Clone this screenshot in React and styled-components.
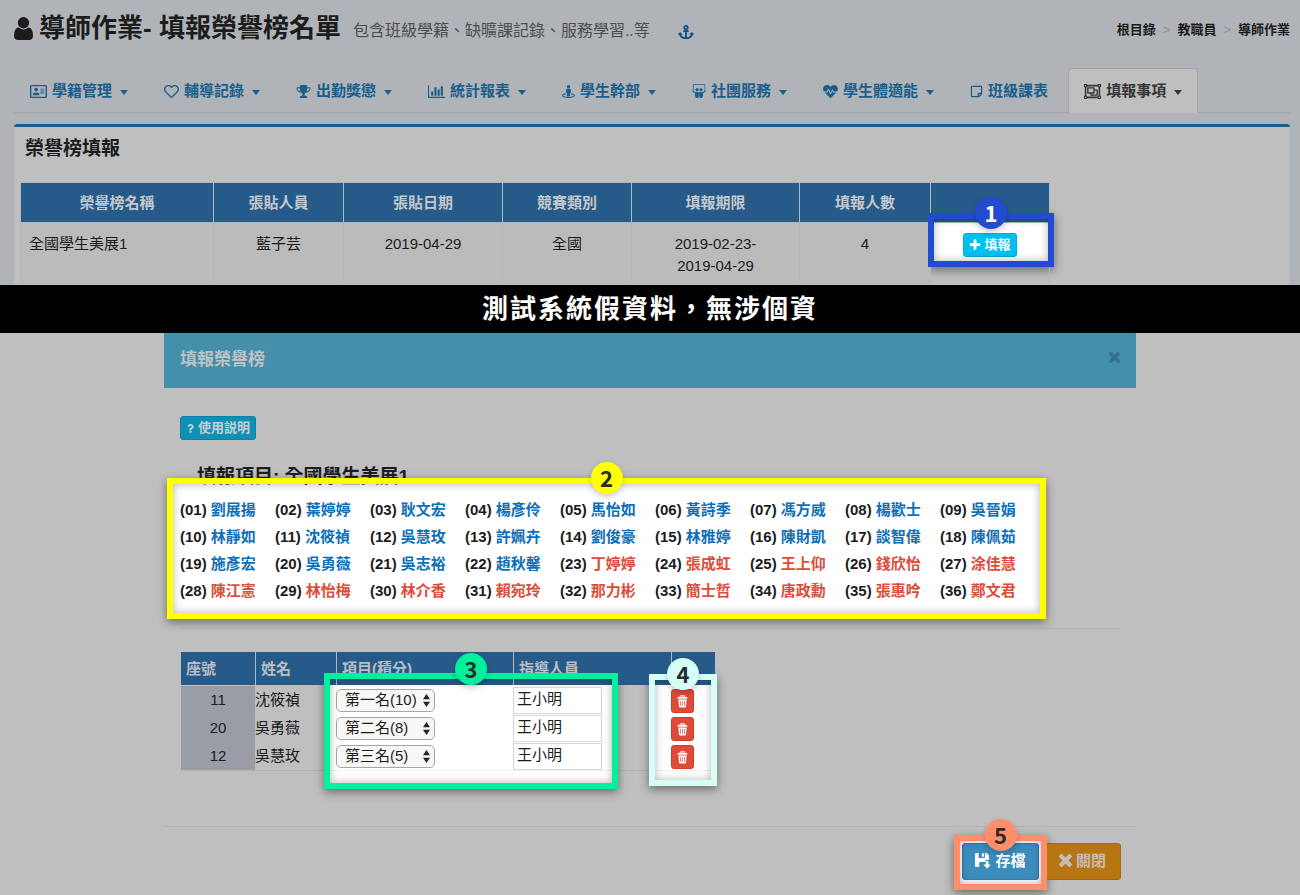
import React from "react";
import styled, { createGlobalStyle, css } from "styled-components";
import {
  FaAnchor,
  FaHeartbeat,
  FaQuestion,
  FaRegAddressCard,
  FaRegHeart,
  FaRegObjectGroup,
  FaRegStickyNote,
  FaSlideshare,
  FaStreetView,
} from "react-icons/fa";

const GlobalStyle = createGlobalStyle`
  *, *::before, *::after { box-sizing: border-box; }
  body {
    margin: 0;
    background: #bfbfbf;
    color: #1c1c1c;
    font-family: "Liberation Sans", "Noto Sans CJK TC", sans-serif;
    font-size: 15px;
    line-height: 22px;
  }
  button, input, select { font: inherit; }
  a { text-decoration: none; color: inherit; }
`;

/* ---------- icons ---------- */

const Glyph = ({ width, height, box, d }) => (
  <svg width={width} height={height} viewBox={box} fill="currentColor" aria-hidden="true">
    <path d={d} />
  </svg>
);

const UserIcon = () => (
  <Glyph
    width={19}
    height={23}
    box="256 128 1280 1536"
    d="M1536 1399q0 109-62.5 187t-150.5 78h-854q-88 0-150.5-78t-62.5-187q0-85 8.5-160.5t31.5-152 58.5-131 94-89 134.5-34.5q131 128 313 128t313-128q76 0 134.5 34.5t94 89 58.5 131 31.5 152 8.5 160.5zm-256-887q0 159-112.5 271.5t-271.5 112.5-271.5-112.5-112.5-271.5 112.5-271.5 271.5-112.5 271.5 112.5 112.5 271.5z"
  />
);

const TrophyIcon = () => (
  <Glyph
    width={15}
    height={15}
    box="0 0 1792 1792"
    d="M522 883q-74-162-74-371h-256v96q0 78 94.5 162t235.5 113zm1078-275v-96h-256q0 209-74 371 141-29 235.5-113t94.5-162zm128-128v128q0 71-41.5 143t-112 130-173 97.5-215.5 44.5q-42 54-95 95-38 34-52.5 72.5t-14.5 89.5q0 54 30.5 91t97.5 37q75 0 133.5 45.5t58.5 114.5v64q0 14-9 23t-23 9h-832q-14 0-23-9t-9-23v-64q0-69 58.5-114.5t133.5-45.5q67 0 97.5-37t30.5-91q0-51-14.5-89.5t-52.5-72.5q-53-41-95-95-113-5-215.5-44.5t-173-97.5-112-130-41.5-143v-128q0-40 28-68t68-28h288v-96q0-66 47-113t113-47h576q66 0 113 47t47 113v96h288q40 0 68 28t28 68z"
  />
);

const ChartIcon = () => (
  <Glyph
    width={17}
    height={15}
    box="0 0 2048 1792"
    d="M640 896v512h-256v-512h256zm384-512v1024h-256v-1024h256zm1024 1152v128h-2048v-1536h128v1408h1920zm-640-896v768h-256v-768h256zm384-384v1152h-256v-1152h256z"
  />
);

const PlusIcon = () => (
  <Glyph
    width={12}
    height={12}
    box="96 96 1600 1600"
    d="M1600 736v192q0 40-28 68t-68 28h-416v416q0 40-28 68t-68 28h-192q-40 0-68-28t-28-68v-416h-416q-40 0-68-28t-28-68v-192q0-40 28-68t68-28h416v-416q0-40 28-68t68-28h192q40 0 68 28t28 68v416h416q40 0 68 28t28 68z"
  />
);

const TimesIcon = ({ size }) => (
  <Glyph
    width={size}
    height={size}
    box="302 366 1188 1188"
    d="M1490 1322q0 40-28 68l-136 136q-28 28-68 28t-68-28l-294-294-294 294q-28 28-68 28t-68-28l-136-136q-28-28-28-68t28-68l294-294-294-294q-28-28-28-68t28-68l136-136q28-28 68-28t68 28l294 294 294-294q28-28 68-28t68 28l136 136q28 28 28 68t-28 68l-294 294 294 294q28 28 28 68z"
  />
);

const TrashIcon = () => (
  <svg width="11" height="13" viewBox="0 0 11 13" fill="none" aria-hidden="true">
    <path d="M3.8 1.8V.7h3.4v1.1" stroke="currentColor" strokeWidth="1.1" />
    <path d="M.6 3.8V2.8L1.8 1.8h7.4l1.2 1v1z" fill="currentColor" />
    <path
      fillRule="evenodd"
      fill="currentColor"
      d="M1.4 4.4h8.2L9 11.6q-.1.8-.9.8H2.9q-.8 0-.9-.8zM3.2 6v4.8h.7V6zm2 0v4.8h.7V6zm2 0v4.8h.7V6z"
    />
  </svg>
);

const SaveIcon = () => (
  <svg width="16" height="16" viewBox="0 0 16 16" fill="currentColor" aria-hidden="true">
    <path d="M1 0h2.6v5H10V0h1.6L14 2.4V7h-3.6v2H4.2v5H1q-1 0-1-1V1q0-1 1-1z" />
    <path d="M6.8.4h2.3v3.4H6.8z" />
    <path d="M10.8 8h2.6v3.4h2.4L12 15.8 8.4 11.4h2.4z" />
  </svg>
);

/* ---------- numbered callouts ---------- */

const place = css`
  position: absolute;
  pointer-events: none;
  top: ${(p) => p.$at.top}px;
  left: ${(p) => (p.$at.left === undefined ? "auto" : `${p.$at.left}px`)};
  right: ${(p) => (p.$at.right === undefined ? "auto" : `${p.$at.right}px`)};
  bottom: ${(p) => (p.$at.bottom === undefined ? "auto" : `${p.$at.bottom}px`)};
  width: ${(p) => (p.$at.width === undefined ? "auto" : `${p.$at.width}px`)};
  height: ${(p) => (p.$at.height === undefined ? "auto" : `${p.$at.height}px`)};
`;

const Spotlight = styled.div`
  ${place}
  z-index: 0;
  background: #fff;
  box-shadow: 0 3px 9px rgba(0, 0, 0, 0.45);
`;

const Frame = styled.div`
  ${place}
  z-index: 2;
  border: 6px solid ${(p) => p.$color};
  box-shadow: inset 0 0 8px rgba(0, 0, 0, 0.3);
`;

const Badge = styled.span`
  position: absolute;
  top: ${(p) => p.$top}px;
  left: calc(50% - 16px);
  width: 32px;
  height: 32px;
  border-radius: 50%;
  background: ${(p) => p.$color};
  color: ${(p) => p.$ink};
  font: bold 22px/30px "Noto Sans CJK TC", sans-serif;
  text-align: center;
  box-shadow: 0 3px 6px rgba(0, 0, 0, 0.2);
`;

const Callout = ({ number, color, ink = "#2a2a2a", at, badgeTop = -22 }) => (
  <>
    <Spotlight $at={at} />
    <Frame $at={at} $color={color}>
      <Badge $color={color} $ink={ink} $top={badgeTop}>
        {number}
      </Badge>
    </Frame>
  </>
);

/* ---------- page top ---------- */

const Page = styled.div`
  min-width: 1064px;
`;

const Top = styled.div`
  padding: 0 10px 0 14px;
  background: #b0b4b8;
`;

const Header = styled.header`
  display: flex;
  align-items: center;
  justify-content: space-between;
  height: 68px;
  padding-bottom: 12px;
`;

const Heading = styled.div`
  display: flex;
  align-items: center;
`;

const Title = styled.h1`
  display: flex;
  align-items: center;
  gap: 6px;
  margin: 0 12px 0 0;
  font-size: 26px;
  line-height: 40px;
  font-weight: bold;
  white-space: pre;
`;

const Subtitle = styled.small`
  padding-top: 5px;
  margin-right: 28px;
  font-size: 16px;
  color: #4d4d4d;
`;

const AnchorLink = styled.a`
  display: flex;
  padding-top: 8px;
  color: #0f4f86;
`;

const Crumbs = styled.nav`
  display: flex;
  gap: 7px;
  padding-top: 4px;
  font-size: 13px;
  font-weight: bold;
`;

const Chevron = styled.span`
  color: #8f8f8f;
  font-weight: normal;
`;

const Tabs = styled.nav`
  display: flex;
  gap: 4px;
  border-bottom: 1px solid #a4a6a9;
`;

const Tab = styled.a`
  display: flex;
  align-items: center;
  gap: 5px;
  height: 45px;
  margin-bottom: -1px;
  padding: 0 15px;
  border: 1px solid ${(p) => (p.$active ? "#a4a6a9" : "transparent")};
  border-bottom: 0;
  border-radius: 4px 4px 0 0;
  background: ${(p) => (p.$active ? "#bfbfbf" : "transparent")};
  color: ${(p) => (p.$active ? "#363636" : "#1a5f8c")};
  font-weight: bold;
  white-space: nowrap;
`;

const Caret = styled.i`
  margin: 2px 0 0 3px;
  border: solid transparent;
  border-width: 5px 4px 0;
  border-top-color: currentColor;
`;

const Panel = styled.section`
  margin-top: 11px;
  padding: 10px 6px 0;
  border-top: 3px solid #17628f;
  border-radius: 3px 3px 0 0;
  background: #bfbfbf;
`;

const PanelTitle = styled.h2`
  margin: 0 5px 21px;
  font-size: 19px;
  line-height: 24px;
  font-weight: bold;
`;

const BoardWrap = styled.div`
  position: relative;
  width: 1029px;
  isolation: isolate;
`;

const Board = styled.table`
  position: relative;
  z-index: 1;
  width: 100%;
  table-layout: fixed;
  border-collapse: collapse;
  text-align: center;

  th {
    height: 40px;
    padding: 0;
    border: 1px solid #b3b7bb;
    background: #265b89;
    color: #c4c8cc;
  }
  td {
    padding: 10px 8px 8px;
    vertical-align: top;
    border: 1px solid #b6b6b6;
    border-width: 0 1px;
    background: #bbb;
  }
  td:first-child { text-align: left; }
  td:last-child { background: transparent; }
`;

const SmallButton = styled.button`
  display: inline-flex;
  align-items: center;
  justify-content: center;
  gap: 3px;
  height: 24px;
  padding: 0 5px;
  border: 1px solid ${(p) => (p.$dim ? "#0a83a6" : "#00acd6")};
  border-radius: 3px;
  background: ${(p) => (p.$dim ? "#0f90b6" : "#00c0ef")};
  color: ${(p) => (p.$dim ? "#c9cdd0" : "#fff")};
  font-size: 13px;
  font-weight: bold;
  line-height: 20px;
`;

const Banner = styled.p`
  margin: 0;
  background: #000;
  color: #fff;
  font-size: 26px;
  line-height: 48px;
  font-weight: bold;
  letter-spacing: 2px;
  text-align: center;
`;

/* ---------- dialog ---------- */

const Dialog = styled.section`
  max-width: 972px;
  margin: 0 auto;
`;

const DialogHeader = styled.header`
  display: flex;
  align-items: flex-start;
  justify-content: space-between;
  height: 55px;
  padding: 15px 16px 0;
  background: #448fa9;
`;

const DialogTitle = styled.h2`
  margin: 0;
  color: #bfc3c5;
  font-size: 17px;
  line-height: 24px;
`;

const CloseButton = styled.button`
  display: flex;
  padding: 4px 0;
  border: 0;
  background: none;
  color: #35708f;
`;

const DialogBody = styled.div`
  padding: 28px 15px 55px 16px;
  isolation: isolate;
`;

const ItemTitle = styled.h3`
  position: relative;
  z-index: 1;
  margin: 25px 0 7px 17px;
  font-size: 19px;
  line-height: 24px;
  font-weight: bold;
`;

const StudentsWrap = styled.div`
  position: relative;
  max-width: 855px;
`;

const Students = styled.div`
  position: relative;
  z-index: 1;
  display: grid;
  grid-template-columns: repeat(auto-fill, 95px);
  font-weight: bold;
  line-height: 27px;
  white-space: nowrap;
`;

const StudentLink = styled.a`
  color: ${(p) => (p.$girl ? "#dd4b39" : "#0e6fb8")};
`;

const Rule = styled.hr`
  margin: 24px 0 23px;
  border: 0;
  border-top: 1px solid #b2b2b2;
`;

const EntriesWrap = styled.div`
  position: relative;
  width: 534px;
  margin-left: 1px;
`;

const Entries = styled.table`
  position: relative;
  z-index: 1;
  width: 100%;
  table-layout: fixed;
  border-spacing: 0;
  border-bottom: 1px solid rgba(0, 0, 0, 0.06);

  th {
    height: 33px;
    padding: 0 5px;
    border-left: 1px solid #b3b7bb;
    background: #265b89;
    color: #b9bec3;
    text-align: left;
  }
  th:first-child { border-left: 0; }
  td {
    height: 28px;
    padding: 0;
    line-height: 28px;
    vertical-align: middle;
  }
  tbody td:first-child {
    background: #9a9da6;
    text-align: center;
  }
  tbody::before {
    content: "";
    display: table-row;
    height: 1px;
  }
`;

const SelectBox = styled.span`
  position: relative;
  display: block;
  width: 99px;
  height: 23px;

  svg {
    position: absolute;
    top: 5px;
    right: 5px;
    pointer-events: none;
  }
`;

const Select = styled.select`
  appearance: none;
  display: block;
  width: 100%;
  height: 23px;
  padding: 0 8px;
  border: 1px solid #a6a6a6;
  border-radius: 5px;
  background: #f7f7f7;
  color: #1c1c1c;
  line-height: 20px;
`;

const CoachInput = styled.input`
  display: block;
  width: 89px;
  height: 27px;
  padding: 0 3px 2px;
  border: 1px solid #d6d6d6;
  background: #fff;
  color: #1c1c1c;
`;

const TrashButton = styled.button`
  display: flex;
  align-items: center;
  justify-content: center;
  width: 23px;
  height: 24px;
  margin-top: 2px;
  padding: 0;
  border: 1px solid #d73925;
  border-radius: 3px;
  background: #dd4b39;
  color: #fff;
`;

const Footer = styled.footer`
  display: flex;
  justify-content: flex-end;
  gap: 5px;
  padding: 16px 15px 15px;
  border-top: 1px solid #b2b2b2;
  isolation: isolate;
`;

const ButtonSlot = styled.div`
  position: relative;
`;

const ActionButton = styled.button`
  position: relative;
  z-index: ${(p) => (p.$primary ? 1 : 0)};
  display: flex;
  align-items: center;
  justify-content: center;
  gap: 4px;
  width: 77px;
  height: 37px;
  padding: 0 0 2px;
  border: 1px solid ${(p) => (p.$primary ? "#367fa9" : "#a8670a")};
  border-radius: 3px;
  background: ${(p) => (p.$primary ? "#3c8dbc" : "#b87514")};
  color: ${(p) => (p.$primary ? "#fff" : "#c4beb4")};
  font-weight: bold;
`;

/* ---------- data ---------- */

const TABS = [
  { label: "學籍管理", icon: <FaRegAddressCard size={17} /> },
  { label: "輔導記錄", icon: <FaRegHeart size={15} /> },
  { label: "出勤獎懲", icon: <TrophyIcon /> },
  { label: "統計報表", icon: <ChartIcon /> },
  { label: "學生幹部", icon: <FaStreetView size={13} /> },
  { label: "社團服務", icon: <FaSlideshare size={14} /> },
  { label: "學生體適能", icon: <FaHeartbeat size={15} /> },
  { label: "班級課表", icon: <FaRegStickyNote size={13} />, plain: true },
  { label: "填報事項", icon: <FaRegObjectGroup size={17} />, active: true },
];

const BOARD_COLUMNS = [
  ["榮譽榜名稱", 193],
  ["張貼人員", 130],
  ["張貼日期", 159],
  ["競賽類別", 129],
  ["填報期限", 168],
  ["填報人數", 131],
  ["", 119],
];

const STUDENTS =
  "劉展揚 葉婷婷 耿文宏 楊彥伶 馬怡如 黃詩季 馮方威 楊歡士 吳晉娟 林靜如 沈筱禎 吳慧玫 許姵卉 劉俊豪 林雅婷 陳財凱 談智偉 陳佩茹 施彥宏 吳勇薇 吳志裕 趙秋馨 丁婷婷 張成虹 王上仰 錢欣怡 涂佳慧 陳江憲 林怡梅 林介香 賴宛玲 那力彬 簡士哲 唐政勳 張惠吟 鄭文君".split(
    " "
  );

const RANKS = ["第一名(10)", "第二名(8)", "第三名(5)"];

const ENTRIES = [
  { seat: "11", name: "沈筱禎", rank: RANKS[0] },
  { seat: "20", name: "吳勇薇", rank: RANKS[1] },
  { seat: "12", name: "吳慧玫", rank: RANKS[2] },
];

const ENTRY_COLUMNS = [
  ["座號", 74],
  ["姓名", 81],
  ["項目(積分)", 177],
  ["指導人員", 158],
  ["", 44],
];

export default function App() {
  return (
    <Page>
      <GlobalStyle />
      <Top>
        <Header>
          <Heading>
            <Title>
              <UserIcon />
              導師作業- 填報榮譽榜名單
            </Title>
            <Subtitle>包含班級學籍、缺曠課記錄、服務學習..等</Subtitle>
            <AnchorLink href="#top" aria-label="錨點">
              <FaAnchor size={16} />
            </AnchorLink>
          </Heading>
          <Crumbs>
            <a href="#root">根目錄</a>
            <Chevron>&gt;</Chevron>
            <a href="#staff">教職員</a>
            <Chevron>&gt;</Chevron>
            <a href="#tutor">導師作業</a>
          </Crumbs>
        </Header>

        <Tabs>
          {TABS.map((tab) => (
            <Tab key={tab.label} href="#tab" $active={tab.active}>
              {tab.icon}
              {tab.label}
              {!tab.plain && <Caret />}
            </Tab>
          ))}
        </Tabs>

        <Panel>
          <PanelTitle>榮譽榜填報</PanelTitle>
          <BoardWrap>
            <Callout
              number="1"
              color="#214bd0"
              ink="#fff"
              at={{ top: 31, right: -5, width: 126, height: 54 }}
            />
            <Board>
              <colgroup>
                {BOARD_COLUMNS.map(([label, width]) => (
                  <col key={label} width={width} />
                ))}
              </colgroup>
              <thead>
                <tr>
                  {BOARD_COLUMNS.map(([label]) => (
                    <th key={label}>{label}</th>
                  ))}
                </tr>
              </thead>
              <tbody>
                <tr>
                  <td>全國學生美展1</td>
                  <td>藍子芸</td>
                  <td>2019-04-29</td>
                  <td>全國</td>
                  <td>
                    2019-02-23-
                    <br />
                    2019-04-29
                  </td>
                  <td>4</td>
                  <td>
                    <SmallButton type="button">
                      <PlusIcon />
                      填報
                    </SmallButton>
                  </td>
                </tr>
              </tbody>
            </Board>
          </BoardWrap>
        </Panel>
      </Top>

      <Banner>測試系統假資料，無涉個資</Banner>

      <Dialog>
        <DialogHeader>
          <DialogTitle>填報榮譽榜</DialogTitle>
          <CloseButton type="button" aria-label="關閉視窗">
            <TimesIcon size={11} />
          </CloseButton>
        </DialogHeader>

        <DialogBody>
          <SmallButton type="button" $dim>
            <FaQuestion size={9} />
            使用説明
          </SmallButton>
          <ItemTitle>填報項目: 全國學生美展1</ItemTitle>

          <StudentsWrap>
            <Callout number="2" color="#ffff00" at={{ top: -18, left: -13, right: -11, bottom: -15 }} />
            <Students>
              {STUDENTS.map((name, i) => (
                <span key={i}>
                  ({String(i + 1).padStart(2, "0")}){" "}
                  <StudentLink href="#student" $girl={i >= 22}>
                    {name}
                  </StudentLink>
                </span>
              ))}
            </Students>
          </StudentsWrap>

          <Rule />

          <EntriesWrap>
            <Callout
              number="3"
              color="#00f09c"
              at={{ top: 21, left: 143, width: 294, height: 116 }}
              badgeTop={-26}
            />
            <Callout
              number="4"
              color="#d5fff6"
              at={{ top: 22, left: 468, width: 68, height: 112 }}
            />
            <Entries>
              <colgroup>
                {ENTRY_COLUMNS.map(([label, width]) => (
                  <col key={label} width={width} />
                ))}
              </colgroup>
              <thead>
                <tr>
                  {ENTRY_COLUMNS.map(([label]) => (
                    <th key={label}>{label}</th>
                  ))}
                </tr>
              </thead>
              <tbody>
                {ENTRIES.map((entry) => (
                  <tr key={entry.seat}>
                    <td>{entry.seat}</td>
                    <td>{entry.name}</td>
                    <td>
                      <SelectBox>
                        <Select aria-label={`${entry.name} 項目(積分)`} defaultValue={entry.rank}>
                          {RANKS.map((rank) => (
                            <option key={rank}>{rank}</option>
                          ))}
                        </Select>
                        <svg width="7" height="13" viewBox="0 0 7 13" fill="#222">
                          <path d="M3.5 0 7 5.2H0zM3.5 13 0 7.8h7z" />
                        </svg>
                      </SelectBox>
                    </td>
                    <td>
                      <CoachInput aria-label={`${entry.name} 指導人員`} defaultValue="王小明" />
                    </td>
                    <td>
                      <TrashButton type="button" aria-label={`刪除 ${entry.name}`}>
                        <TrashIcon />
                      </TrashButton>
                    </td>
                  </tr>
                ))}
              </tbody>
            </Entries>
          </EntriesWrap>
        </DialogBody>

        <Footer>
          <ButtonSlot>
            <Callout
              number="5"
              color="#ff8f6b"
              at={{ top: -8, left: -8, right: -8, bottom: -10 }}
            />
            <ActionButton type="button" $primary>
              <SaveIcon />
              存檔
            </ActionButton>
          </ButtonSlot>
          <ActionButton type="button">
            <TimesIcon size={13} />
            關閉
          </ActionButton>
        </Footer>
      </Dialog>
    </Page>
  );
}
